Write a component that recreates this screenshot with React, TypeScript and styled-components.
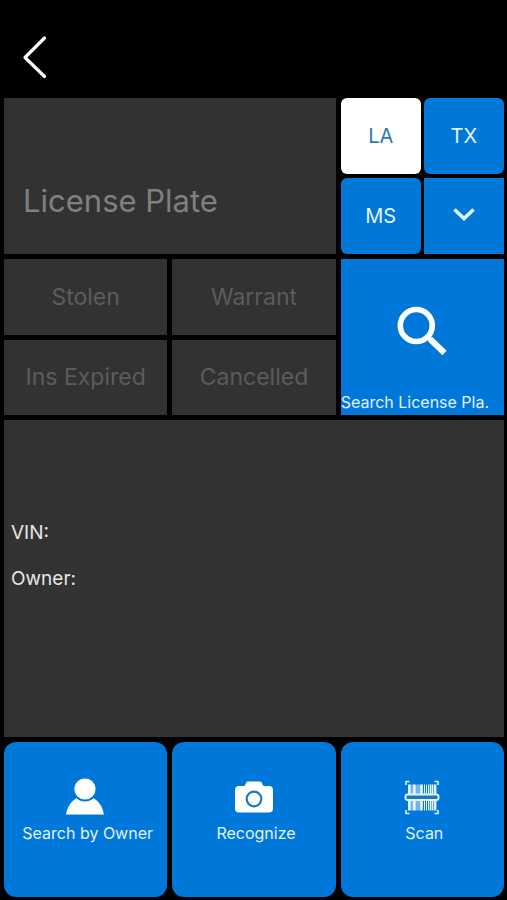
import React from "react";
import styled, { createGlobalStyle } from "styled-components";

const color = {
  panel: "#323232",
  blue: "#0078d9",
  label: "#e2f3ff",
  faint: "#5c5c5c",
};

const GlobalStyle = createGlobalStyle`
  * { box-sizing: border-box; }
  body {
    margin: 0;
    background: #000;
    color: #fff;
    font-family: Inter, "Liberation Sans", sans-serif;
  }
  button, input { font: inherit; }
`;

const Page = styled.div`
  display: flex;
  flex-direction: column;
  min-height: 100vh;
  padding: 0 3px 3px 4px;
`;

const Header = styled.header`
  display: flex;
  align-items: flex-end;
  height: 98px;
  padding: 0 0 14px 12px;
`;

const BackButton = styled.button`
  display: flex;
  padding: 4px;
  border: 0;
  background: none;
  color: #fff;
  cursor: pointer;
`;

const Board = styled.main`
  flex: 1;
  display: grid;
  grid-template-columns: repeat(3, minmax(0, 1fr));
  grid-template-rows: 156px 156px minmax(240px, 1fr) 155px;
  gap: 5px;
`;

const PlateField = styled.label`
  grid-column: span 2;
  display: flex;
  align-items: flex-end;
  padding: 0 19px 33px;
  background: ${color.panel};
`;

const PlateInput = styled.input`
  width: 100%;
  height: 42px;
  padding: 0;
  border: 0;
  outline: 0;
  background: none;
  color: #fff;
  font-size: 31px;
  &::placeholder { color: #808080; opacity: 1; }
`;

const StateGrid = styled.div`
  display: grid;
  grid-template-columns: repeat(2, minmax(0, 1fr));
  grid-template-rows: repeat(2, minmax(0, 1fr));
  gap: 4px 3px;
`;

const StateButton = styled.button<{ $selected?: boolean; $square?: boolean }>`
  display: flex;
  align-items: center;
  justify-content: center;
  padding: 0;
  border: 0;
  border-radius: ${(p) => (p.$square ? "0" : "6px")};
  background: ${(p) => (p.$selected ? "#fff" : color.blue)};
  color: ${(p) => (p.$selected ? "#2f78b4" : color.label)};
  font-size: 20px;
  cursor: pointer;
`;

const StatusGrid = styled.ul`
  grid-column: span 2;
  display: grid;
  grid-template-columns: repeat(2, minmax(0, 1fr));
  grid-template-rows: repeat(2, minmax(0, 1fr));
  gap: 5px;
  margin: 0;
  padding: 0;
  list-style: none;
`;

const Status = styled.li`
  display: flex;
  align-items: center;
  justify-content: center;
  background: ${color.panel};
  color: ${color.faint};
  font-size: 23px;
`;

const SearchButton = styled.button`
  display: flex;
  flex-direction: column;
  align-items: center;
  justify-content: flex-end;
  gap: 36px;
  padding: 0 0 3px;
  border: 0;
  background: ${color.blue};
  color: #fff;
  cursor: pointer;
`;

const SearchLabel = styled.span`
  align-self: flex-start;
  color: ${color.label};
  font-size: 16px;
  line-height: 20px;
  white-space: nowrap;
`;

const Details = styled.dl`
  grid-column: 1 / -1;
  display: flex;
  flex-direction: column;
  justify-content: center;
  gap: 22px;
  margin: 0;
  padding: 0 7px 46px;
  background: ${color.panel};
  color: #e6e6e6;
  font-size: 19px;
  line-height: 24px;
`;

const Detail = styled.div`
  display: flex;
  gap: 8px;
`;

const DetailValue = styled.dd`
  margin: 0;
`;

const ActionButton = styled.button`
  display: flex;
  flex-direction: column;
  align-items: center;
  gap: 6px;
  padding: 34px 0 0;
  border: 0;
  border-radius: 12px;
  background: ${color.blue};
  color: #fff;
  cursor: pointer;
`;

const ActionLabel = styled.span`
  padding-left: 4px;
  color: ${color.label};
  font-size: 16px;
  line-height: 20px;
  white-space: nowrap;
`;

const BackIcon = () => (
  <svg width="32" height="46" viewBox="0 0 32 46" fill="none" stroke="currentColor" strokeWidth="3.2" strokeLinecap="round" strokeLinejoin="round" aria-hidden="true">
    <path d="M24.5 4 5 23.5 24.5 42.5" />
  </svg>
);

const ChevronIcon = () => (
  <svg width="24" height="16" viewBox="0 0 24 16" fill="none" stroke="currentColor" strokeWidth="3.6" aria-hidden="true">
    <path d="M2.500 1.500 12 10.600 21.500 1.500" />
  </svg>
);

const SearchIcon = () => (
  <svg width="50" height="50" viewBox="0 0 50 50" fill="none" stroke="currentColor" aria-hidden="true">
    <circle cx="19.300" cy="19.500" r="16" strokeWidth="5.600" />
    <path d="M31 31 34 34" strokeWidth="4" />
    <path d="M33 33 47.500 47" strokeWidth="6" />
  </svg>
);

const PersonIcon = () => (
  <svg width="40" height="41" viewBox="0 0 40 41" fill="currentColor" aria-hidden="true">
    <circle cx="19" cy="13" r="10.6" />
    <path d="M0 38.500C1.300 31 5 25 10.500 22.200 15.500 26.500 22.500 26.500 27.500 22.200 33 25 36.700 31 38 38.500Z" />
  </svg>
);

const CameraIcon = () => (
  <svg width="40" height="41" viewBox="0 0 40 41" aria-hidden="true">
    <path fill="currentColor" d="M5 10H9.500Q11 10 11.500 8.500L12 7Q12.500 5.500 14 5.500H26Q27.500 5.500 28 7L28.500 8.500Q29 10 30.500 10H35Q39 10 39 14V32.500Q39 36.500 35 36.500H5Q1 36.500 1 32.500V14Q1 10 5 10Z" />
    <circle cx="20" cy="23" r="7.300" fill="none" stroke="#1a79c4" strokeWidth="2.200" />
  </svg>
);

const BarcodeIcon = () => (
  <svg width="36" height="41" viewBox="0 0 36 41" fill="none" stroke={color.label} aria-hidden="true">
    <path strokeWidth="1.700" strokeLinejoin="round" d="M2 9V5.500H5.500M30.500 5.500H34V9M34 34V37.500H30.500M5.500 37.500H2V34" />
    <path strokeWidth="2.800" d="M5.400 8.500V18M5.400 25V34.500M10.400 8.500V18M10.400 25V34.500M17.500 8.500V18M17.500 25V34.500M31 8.500V18M31 25V34.500" />
    <path strokeWidth="1" d="M8 8.500V18M8 25V34.500M13 8.500V18M13 25V34.500M15 8.500V18M15 25V34.500M20.500 8.500V18M20.500 25V34.500M22.500 8.500V18M22.500 25V34.500M24.500 8.500V18M24.500 25V34.500M28.500 8.500V18M28.500 25V34.500" />
    <path strokeWidth="1.800" d="M26.600 8.500V18M26.600 25V34.500" />
    <rect x="1.500" y="18.500" width="33" height="5.500" rx="2" strokeWidth="1.900" fill="#1778bd" />
  </svg>
);

const statuses = ["Stolen", "Warrant", "Ins Expired", "Cancelled"];
const details = ["VIN:", "Owner:"];
const actions = [
  { label: "Search by Owner", Icon: PersonIcon },
  { label: "Recognize", Icon: CameraIcon },
  { label: "Scan", Icon: BarcodeIcon },
];

export default function App() {
  const [selected, setSelected] = React.useState("LA");

  return (
    <>
      <GlobalStyle />
      <Page>
        <Header>
          <BackButton type="button" aria-label="Back">
            <BackIcon />
          </BackButton>
        </Header>
        <Board>
          <PlateField>
            <PlateInput type="text" placeholder="License Plate" aria-label="License Plate" />
          </PlateField>
          <StateGrid>
            {["LA", "TX", "MS"].map((name) => (
              <StateButton
                key={name}
                type="button"
                $selected={name === selected}
                aria-pressed={name === selected}
                onClick={() => setSelected(name)}
              >
                {name}
              </StateButton>
            ))}
            <StateButton type="button" $square aria-label="More states">
              <ChevronIcon />
            </StateButton>
          </StateGrid>
          <StatusGrid>
            {statuses.map((status) => (
              <Status key={status}>{status}</Status>
            ))}
          </StatusGrid>
          <SearchButton type="button">
            <SearchIcon />
            <SearchLabel>Search License Pla.</SearchLabel>
          </SearchButton>
          <Details>
            {details.map((name) => (
              <Detail key={name}>
                <dt>{name}</dt>
                <DetailValue />
              </Detail>
            ))}
          </Details>
          {actions.map(({ label, Icon }) => (
            <ActionButton key={label} type="button">
              <Icon />
              <ActionLabel>{label}</ActionLabel>
            </ActionButton>
          ))}
        </Board>
      </Page>
    </>
  );
}
